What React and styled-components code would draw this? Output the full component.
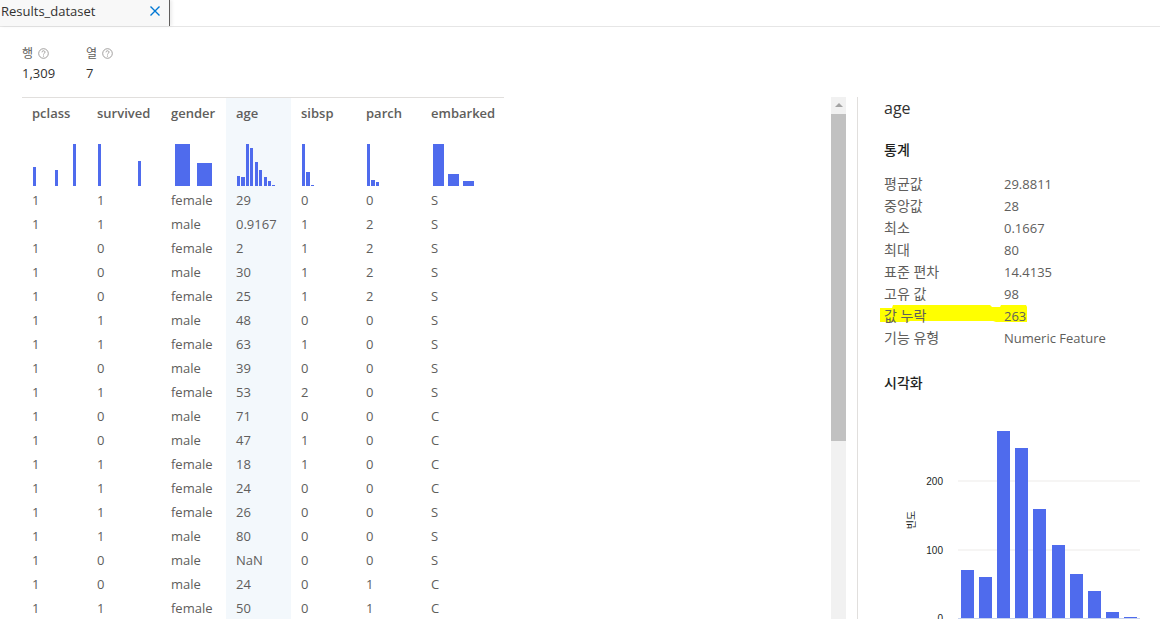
import React from "react";
import styled, { createGlobalStyle } from "styled-components";

const FONT = `"Open Sans", "Noto Sans", "Noto Sans CJK KR", sans-serif`;

const columns = [
  { name: "pclass", width: 65, bars: [[11, 3, 19], [33, 3, 16], [51, 3, 42]] },
  { name: "survived", width: 74, bars: [[11, 3, 42], [51, 3, 25]] },
  { name: "gender", width: 65, bars: [[14, 15, 42], [36, 15, 23]] },
  {
    name: "age",
    width: 65,
    active: true,
    bars: [
      [11, 3, 10], [15, 4, 9], [20, 3, 42], [24, 3, 38], [29, 3, 24],
      [33, 3, 16], [38, 3, 9], [42, 3, 5], [46, 3, 1],
    ],
  },
  { name: "sibsp", width: 65, bars: [[11, 3, 42], [15, 4, 14], [20, 3, 1]] },
  { name: "parch", width: 65, bars: [[11, 3, 42], [15, 4, 6], [20, 3, 4]] },
  { name: "embarked", width: 83, bars: [[12, 11, 42], [27, 11, 12], [42, 11, 5]] },
];

const rows = [
  ["1", "1", "female", "29", "0", "0", "S"],
  ["1", "1", "male", "0.9167", "1", "2", "S"],
  ["1", "0", "female", "2", "1", "2", "S"],
  ["1", "0", "male", "30", "1", "2", "S"],
  ["1", "0", "female", "25", "1", "2", "S"],
  ["1", "1", "male", "48", "0", "0", "S"],
  ["1", "1", "female", "63", "1", "0", "S"],
  ["1", "0", "male", "39", "0", "0", "S"],
  ["1", "1", "female", "53", "2", "0", "S"],
  ["1", "0", "male", "71", "0", "0", "C"],
  ["1", "0", "male", "47", "1", "0", "C"],
  ["1", "1", "female", "18", "1", "0", "C"],
  ["1", "1", "female", "24", "0", "0", "C"],
  ["1", "1", "female", "26", "0", "0", "S"],
  ["1", "1", "male", "80", "0", "0", "S"],
  ["1", "0", "male", "NaN", "0", "0", "S"],
  ["1", "0", "male", "24", "0", "1", "C"],
  ["1", "1", "female", "50", "0", "1", "C"],
];

const stats = [
  ["평균값", "29.8811"],
  ["중앙값", "28"],
  ["최소", "0.1667"],
  ["최대", "80"],
  ["표준 편차", "14.4135"],
  ["고유 값", "98"],
  ["값 누락", "263", true],
  ["기능 유형", "Numeric Feature"],
];

const histogram = [
  [961, 570], [979, 577], [997, 431], [1015, 448], [1033, 509],
  [1052, 545], [1070, 574], [1088, 591], [1106, 612], [1124, 617],
];

export default function App() {
  return (
    <Page>
      <GlobalStyle />
      <TabBar>
        <Tab>
          <TabTitle>Results_dataset</TabTitle>
          <svg width="10" height="10" viewBox="0 0 10 10">
            <path d="M.5.5l9 9M9.5.5l-9 9" stroke="#0078d4" strokeWidth="1.4" fill="none" />
          </svg>
        </Tab>
      </TabBar>
      <Main>
        <LeftPane>
          <Summary>
            <SummaryItem $width={64}>
              <SummaryLabel>
                행 <HelpIcon />
              </SummaryLabel>
              <SummaryValue>1,309</SummaryValue>
            </SummaryItem>
            <SummaryItem $width={64}>
              <SummaryLabel>
                열 <HelpIcon />
              </SummaryLabel>
              <SummaryValue>7</SummaryValue>
            </SummaryItem>
          </Summary>
          <Table>
            <HeadRow>
              {columns.map((col) => (
                <HeadCell key={col.name} $width={col.width} $active={col.active}>
                  <HeadName>{col.name}</HeadName>
                  <MiniChart width={col.width} height={42}>
                    {col.bars.map(([x, w, h]) => (
                      <rect key={x} x={x} y={42 - h} width={w} height={h} fill="#4f6bed" />
                    ))}
                  </MiniChart>
                </HeadCell>
              ))}
            </HeadRow>
            {rows.map((row, i) => (
              <Row key={i}>
                {row.map((value, j) => (
                  <Cell key={j} $width={columns[j].width} $active={columns[j].active}>
                    {value}
                  </Cell>
                ))}
              </Row>
            ))}
          </Table>
        </LeftPane>
        <Scrollbar>
          <ScrollArrow />
          <ScrollThumb />
        </Scrollbar>
        <Details>
          <ColumnName>age</ColumnName>
          <SectionTitle>통계</SectionTitle>
          <StatList>
            {stats.map(([label, value, marked]) => (
              <StatRow key={label}>
                {marked && (
                  <Marker width="147" height="18" viewBox="0 0 147 18">
                    <path
                      d="M0 3H12L13 0H110L112 2H120L121 0H146L147 2V17H116L113 16H30L28 17H0Z"
                      fill="#ffff00"
                    />
                  </Marker>
                )}
                <StatLabel>{label}</StatLabel>
                <StatValue>{value}</StatValue>
              </StatRow>
            ))}
          </StatList>
          <SectionTitle $gap={24}>시각화</SectionTitle>
          <ChartBox>
            <svg width="262" height="226" viewBox="898 393 262 226">
              <line x1="958" x2="1140" y1="481" y2="481" stroke="#edebe9" />
              <line x1="958" x2="1140" y1="550" y2="550" stroke="#edebe9" />
              {histogram.map(([x, top]) => (
                <rect key={x} x={x} y={top} width="13" height={618 - top} fill="#4f6bed" />
              ))}
              <line x1="958" x2="1140" y1="618.5" y2="618.5" stroke="#c8d3ee" />
              <AxisText x="943" y="484.5" textAnchor="end">200</AxisText>
              <AxisText x="943" y="553.5" textAnchor="end">100</AxisText>
              <AxisText x="943" y="621.5" textAnchor="end">0</AxisText>
              <AxisText x="915" y="520" textAnchor="middle" transform="rotate(-90 915 520)">빈도</AxisText>
            </svg>
          </ChartBox>
        </Details>
      </Main>
    </Page>
  );
}

function HelpIcon() {
  return (
    <svg width="11" height="11" viewBox="0 0 11 11">
      <circle cx="5.5" cy="5.5" r="4.8" fill="none" stroke="#8a8886" strokeWidth="0.8" />
      <path d="M4 4.3c0-2 3-2 3 -.1c0 1.1-1.5 1.1-1.5 2.3" fill="none" stroke="#8a8886" strokeWidth="0.8" />
      <circle cx="5.5" cy="8" r="0.55" fill="#8a8886" />
    </svg>
  );
}

const GlobalStyle = createGlobalStyle`
  html, body {
    margin: 0;
    padding: 0;
    background: #fff;
    overflow: hidden;
  }
`;

const Page = styled.div`
  width: 1160px;
  height: 619px;
  overflow: hidden;
  display: flex;
  flex-direction: column;
  font-family: ${FONT};
  font-size: 13px;
  color: #605e5c;
`;

const TabBar = styled.div`
  height: 26px;
  flex: none;
  display: flex;
  border-bottom: 1px solid #e6e6e6;
`;

const Tab = styled.div`
  width: 170px;
  display: flex;
  align-items: center;
  justify-content: space-between;
  padding: 0 9px 5px 1px;
  box-sizing: border-box;
  background: #f8f8f8;
  border-right: 1px solid #605e5c;
  box-shadow: 2px 0 3px rgba(0, 0, 0, 0.08);
`;

const TabTitle = styled.span`
  color: #323130;
  font-size: 13px;
`;

const Main = styled.div`
  flex: 1;
  min-height: 0;
  display: flex;
`;

const LeftPane = styled.div`
  width: 831px;
  flex: none;
  padding: 17px 0 0 22px;
  box-sizing: border-box;
`;

const Summary = styled.div`
  display: flex;
  height: 53px;
`;

const SummaryItem = styled.div`
  width: ${(p) => p.$width}px;
`;

const SummaryLabel = styled.div`
  display: flex;
  align-items: center;
  gap: 5px;
  height: 18px;
  font-size: 12px;
`;

const SummaryValue = styled.div`
  margin-top: 2px;
  height: 18px;
  line-height: 18px;
  color: #323130;
`;

const Table = styled.div`
  width: 482px;
  border-top: 1px solid #e1dfdd;
`;

const HeadRow = styled.div`
  display: flex;
  height: 90px;
`;

const HeadCell = styled.div`
  width: ${(p) => p.$width}px;
  flex: none;
  display: flex;
  flex-direction: column;
  background: ${(p) => (p.$active ? "#f3f8fc" : "transparent")};
`;

const HeadName = styled.div`
  height: 32px;
  padding: 6px 0 0 10px;
  box-sizing: border-box;
  line-height: 18px;
  font-weight: 600;
  color: #605e5c;
  white-space: nowrap;
`;

const MiniChart = styled.svg`
  display: block;
  margin-top: 14px;
`;

const Row = styled.div`
  display: flex;
  height: 24px;
`;

const Cell = styled.div`
  width: ${(p) => p.$width}px;
  flex: none;
  padding-left: 10px;
  box-sizing: border-box;
  line-height: 24px;
  background: ${(p) => (p.$active ? "#f3f8fc" : "transparent")};
`;

const Scrollbar = styled.div`
  width: 15px;
  flex: none;
  margin-top: 70px;
  background: #f1f1f1;
  display: flex;
  flex-direction: column;
`;

const ScrollArrow = styled.div`
  height: 17px;
  display: flex;
  justify-content: center;
  padding-top: 6px;
  box-sizing: border-box;

  &::before {
    content: "";
    width: 0;
    height: 0;
    border-left: 4px solid transparent;
    border-right: 4px solid transparent;
    border-bottom: 4px solid #a3a3a3;
  }
`;

const ScrollThumb = styled.div`
  height: 327px;
  background: #c1c1c1;
`;

const Details = styled.div`
  width: 303px;
  flex: none;
  margin: 70px 0 0 11px;
  padding: 0 0 0 26px;
  box-sizing: border-box;
  border-left: 1px solid #e1dfdd;
`;

const ColumnName = styled.div`
  height: 24px;
  line-height: 22px;
  font-size: 16px;
  color: #323130;
`;

const SectionTitle = styled.div`
  margin-top: ${(p) => p.$gap || 19}px;
  height: 20px;
  line-height: 20px;
  font-size: 14px;
  font-weight: 500;
  color: #201f1e;
`;

const StatList = styled.div`
  margin-top: 13px;
`;

const StatRow = styled.div`
  display: flex;
  height: 22px;
  line-height: 22px;
  position: relative;
`;

const Marker = styled.svg`
  position: absolute;
  left: -4px;
  top: 0;
`;

const StatLabel = styled.div`
  width: 120px;
  position: relative;
  font-size: 14px;
`;

const StatValue = styled.div`
  position: relative;
`;

const ChartBox = styled.div`
  margin-left: 14px;
`;

const AxisText = styled.text`
  font-family: "Liberation Sans", "Noto Sans CJK KR", sans-serif;
  font-size: 10px;
  fill: #201f1e;
`;
